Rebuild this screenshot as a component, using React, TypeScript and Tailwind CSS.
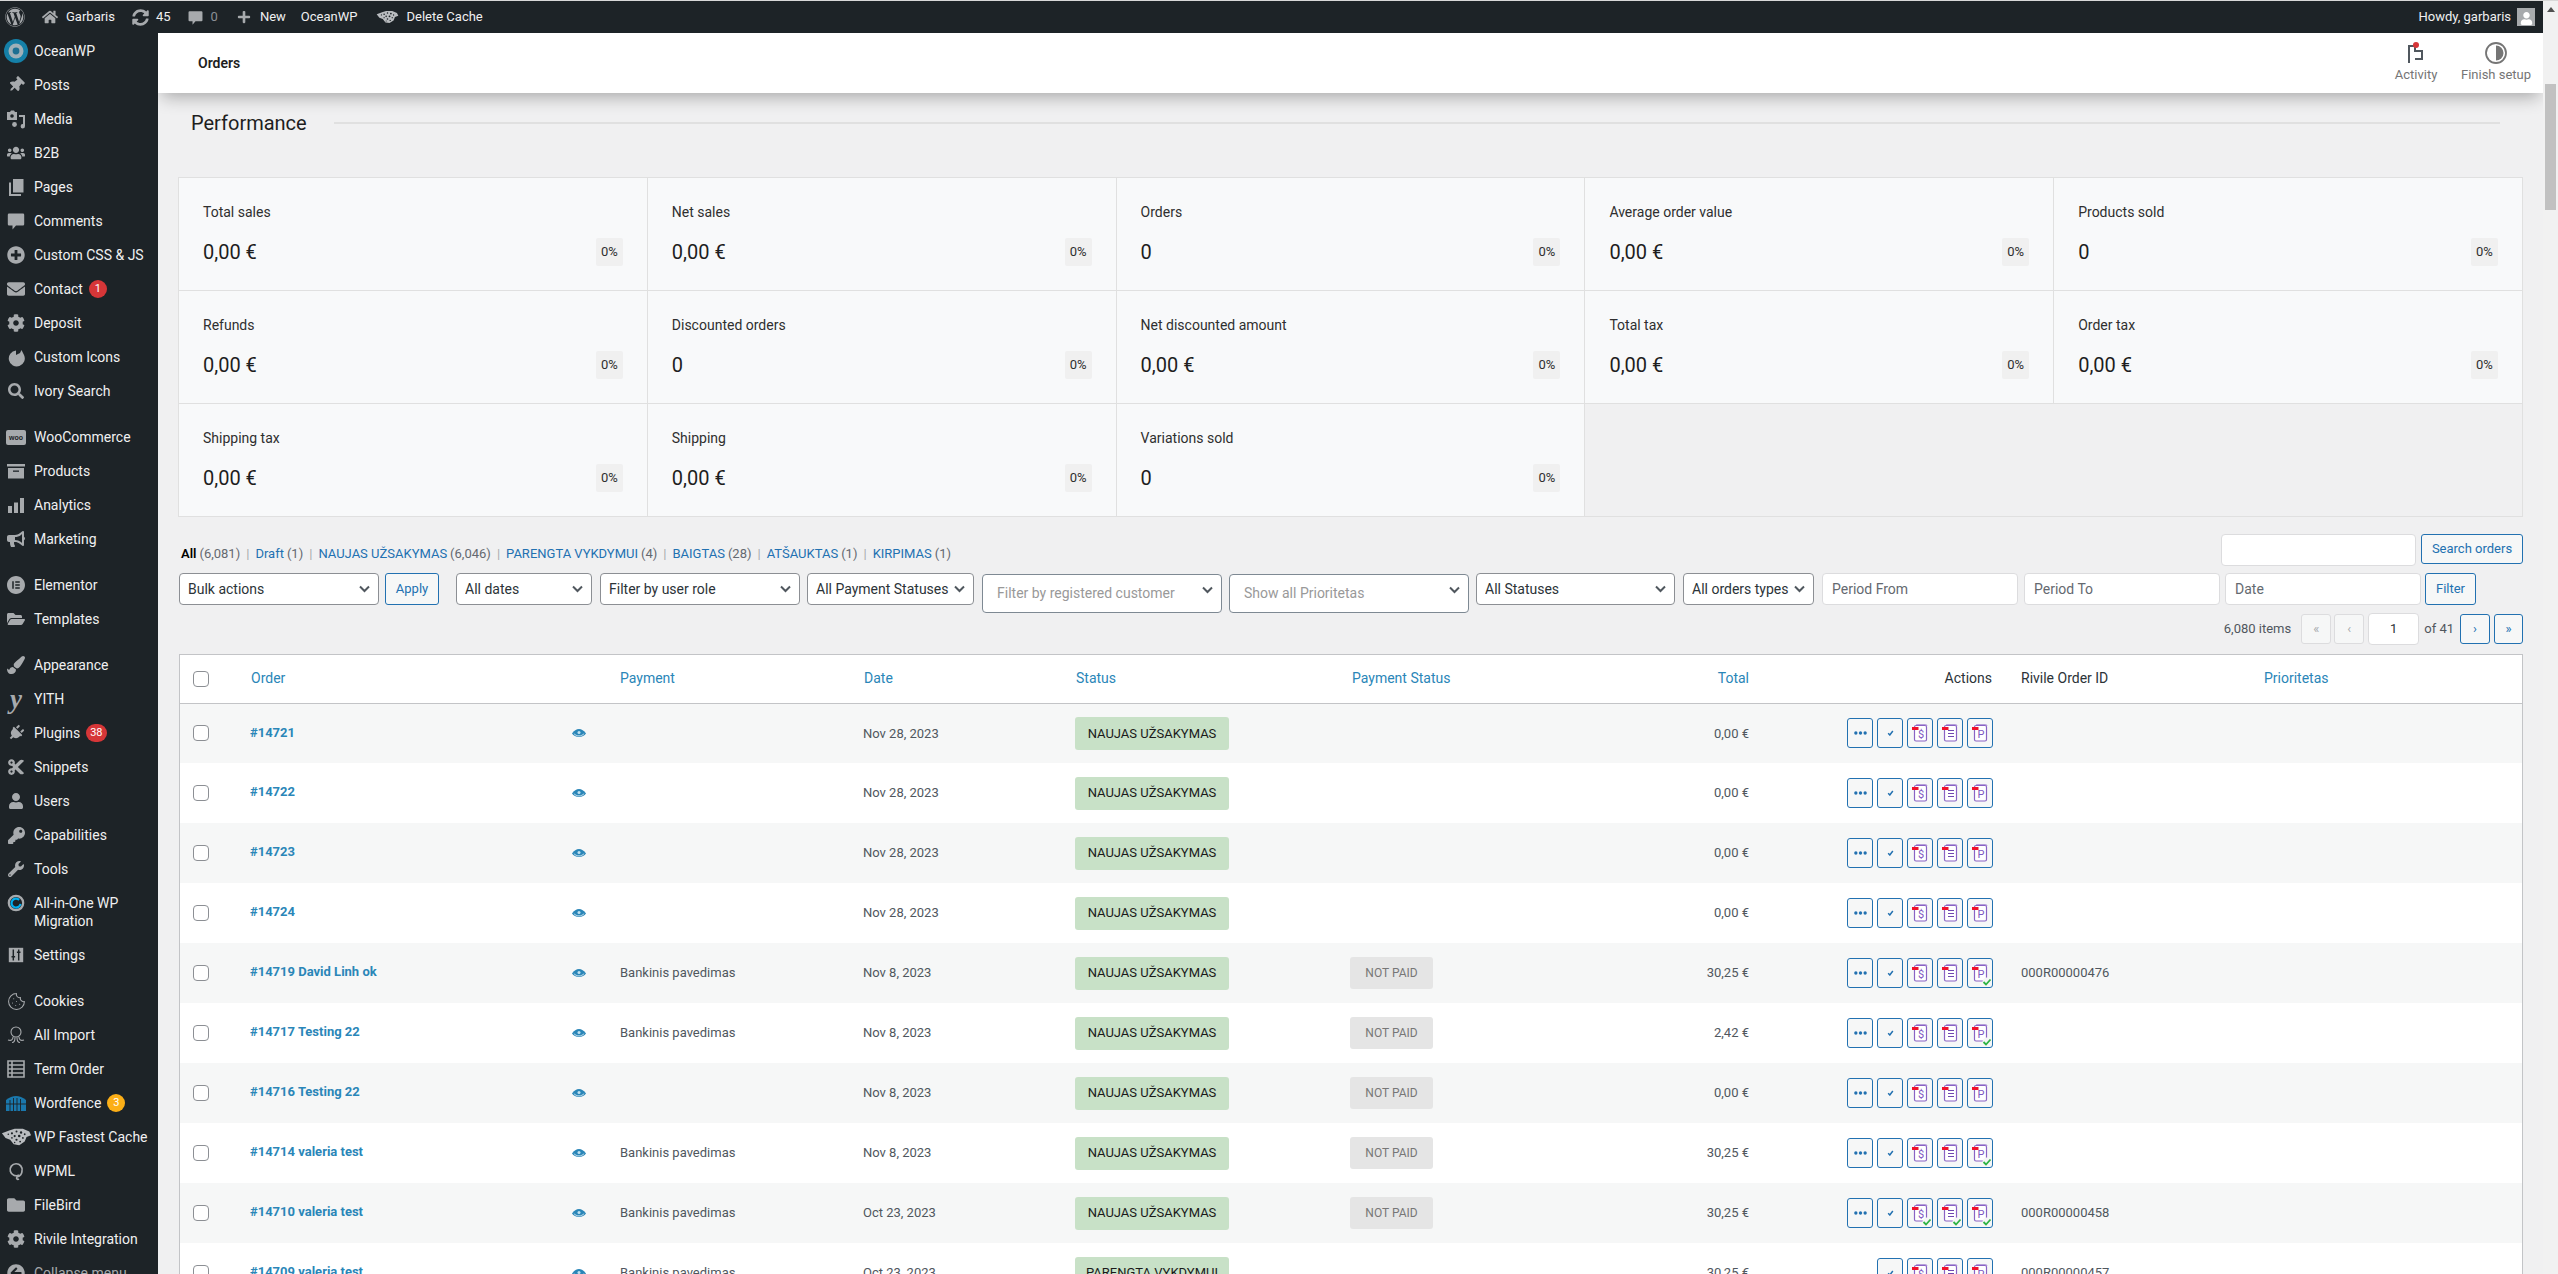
import React from "react";
import {
  FaWordpress, FaHome, FaSyncAlt, FaPlus, FaThumbtack, FaUsers, FaPlusCircle, FaEnvelope, FaCog, FaSearch,
  FaBullhorn, FaFolderOpen, FaPaintBrush, FaPlug, FaCut, FaUser, FaKey, FaWrench, FaFolder, FaArrowCircleLeft,
} from "react-icons/fa";
import { SiElementor } from "react-icons/si";
import { Cookie } from "lucide-react";

const G = "#a7aaad";
const Svg = ({ children, w = 20, h = 20, vb = "0 0 20 20" }: { children: React.ReactNode; w?: number; h?: number; vb?: string }) => (
  <svg width={w} height={h} viewBox={vb} fill={G}>{children}</svg>
);
const CommentIcon = ({ s = 20, fill = G }: { s?: number; fill?: string }) => (
  <svg width={s} height={s} viewBox="0 0 20 20" fill={fill}>
    <path d="M3 2.500h14a1.200 1.200 0 0 1 1.200 1.200v9.600a1.200 1.200 0 0 1-1.200 1.200h-7l-3.500 4v-4H3a1.200 1.200 0 0 1-1.200-1.200V3.700A1.200 1.200 0 0 1 3 2.500z" />
  </svg>
);
const Leopard = ({ w, h }: { w: number; h: number }) => (
  <svg width={w} height={h} viewBox="0 0 34 20">
    <path d="M1 6 L9 3 L15 1 L24 1 L31 4 L33 8 L28 10 L26 15 L20 19 L14 18 L10 13 L5 11 Z" fill="#b9bcbf" />
    <g fill="#1d2327">
      <circle cx="12" cy="6" r="1.200" /><circle cx="17" cy="4" r="1.100" /><circle cx="22" cy="5" r="1.300" /><circle cx="26" cy="7" r="1" />
      <circle cx="15" cy="9" r="1.200" /><circle cx="20" cy="9" r="1.400" /><circle cx="24" cy="11" r="1" /><circle cx="17" cy="13" r="1.200" />
      <circle cx="21" cy="15" r="1" /><circle cx="8" cy="7" r="0.900" /><circle cx="12" cy="11" r="0.900" /><circle cx="15" cy="16" r="0.800" />
    </g>
  </svg>
);
const Rot = ({ children }: { children: React.ReactNode }) => <span className="inline-flex rotate-45">{children}</span>;

type Item = { t: React.ReactNode; i: React.ReactNode; mt?: boolean; badge?: string; color?: string; two?: boolean };
const items: Item[] = [
  { t: "OceanWP", i: <svg width="24" height="24" viewBox="0 0 24 24"><circle cx="12" cy="12" r="12" fill="#1580a8" /><circle cx="12" cy="12" r="7.500" fill="#9fb0b8" /><circle cx="12" cy="12" r="3.400" fill="#1d6f92" /></svg> },
  { t: "Posts", i: <Rot><FaThumbtack size={16} color={G} /></Rot> },
  { t: "Media", i: <Svg><path d="M1 3h3l1-1.500h3L9 3h2v8H1z" /><circle cx="6" cy="7" r="1.800" fill="#1d2327" /><path d="M13 6h6v11a2.200 2.200 0 1 1-2-2V8h-4z" /><circle cx="8.500" cy="15.500" r="2.400" /></Svg> },
  { t: "B2B", i: <FaUsers size={18} color={G} /> },
  { t: "Pages", i: <Svg><path d="M7 2h10.500v13.500H7z" /><path d="M3 5.500h2V17h10v2H3z" /></Svg> },
  { t: "Comments", i: <CommentIcon /> },
  { t: "Custom CSS & JS", i: <FaPlusCircle size={18} color={G} /> },
  { t: "Contact", i: <FaEnvelope size={18} color={G} />, badge: "1" },
  { t: "Deposit", i: <FaCog size={18} color={G} /> },
  { t: "Custom Icons", i: <Svg><path d="M10 3.500 A8 8 0 1 0 18 8 L15.500 3 L14 6 L10 8 Z" /></Svg> },
  { t: "Ivory Search", i: <FaSearch size={16} color={G} /> },
  { t: "WooCommerce", mt: true, i: <span className="flex h-[15px] w-[20px] items-center justify-center rounded-[2px] bg-[#a7aaad] font-['Liberation_Sans',sans-serif] text-[7px] leading-none font-bold text-[#1d2327]">woo</span> },
  { t: "Products", i: <Svg><path d="M1 3h18v2.500H1z" /><path d="M2 7h16v10.500H2z" /><path d="M7 9.500h6v1.300H7z" fill="#1d2327" /></Svg> },
  { t: "Analytics", i: <Svg><path d="M2 11h4v7H2z" /><path d="M8 7.500h4V18H8z" /><path d="M14 3h4v15h-4z" /></Svg> },
  { t: "Marketing", i: <FaBullhorn size={18} color={G} /> },
  { t: "Elementor", mt: true, i: <SiElementor size={18} color={G} /> },
  { t: "Templates", i: <FaFolderOpen size={18} color={G} /> },
  { t: "Appearance", mt: true, i: <FaPaintBrush size={18} color={G} /> },
  { t: "YITH", i: <span className="font-['Liberation_Serif',serif] text-[27px] leading-none font-bold text-[#a7aaad] italic">y</span> },
  { t: "Plugins", i: <Rot><FaPlug size={16} color={G} /></Rot>, badge: "38" },
  { t: "Snippets", i: <FaCut size={18} color={G} /> },
  { t: "Users", i: <FaUser size={16} color={G} /> },
  { t: "Capabilities", i: <FaKey size={17} color={G} /> },
  { t: "Tools", i: <FaWrench size={16} color={G} /> },
  { t: <>All-in-One WP<br />Migration</>, two: true, i: <svg width="18" height="18" viewBox="0 0 20 20" fill="none"><circle cx="10" cy="10" r="8" stroke={G} strokeWidth="2.500" /><path d="M13.500 6.500 A5 5 0 1 0 15 11" stroke="#00aff0" strokeWidth="2.400" /></svg> },
  { t: "Settings", i: <Svg w={18} h={18}><path d="M2 2h16v16H2z" /><path d="M7 4v12M13 4v12M5 12h4M11 7h4" stroke="#1d2327" strokeWidth="1.600" /></Svg> },
  { t: "Cookies", mt: true, i: <Cookie size={19} color={G} strokeWidth={1.3} /> },
  { t: "All Import", i: <svg width="20" height="20" viewBox="0 0 20 20" fill="none" stroke={G} strokeWidth="1.100"><circle cx="10" cy="7" r="5" /><path d="M7 12c0 3-2 4-5 3M13 12c0 3 2 4 5 3M9 12.500c0 3-1 5-3 5M11 12.500c0 3 1 5 3 5" /></svg> },
  { t: "Term Order", i: <svg width="18" height="18" viewBox="0 0 18 18" fill="none" stroke={G} strokeWidth="1.600"><path d="M1 1h16v16H1zM1 5h16M1 9h16M1 13h16M5 1v16" /></svg> },
  { t: "Wordfence", badge: "3", color: "bg-[#fcaf17]", i: <svg width="20" height="16" viewBox="0 0 20 16" fill="#1a78ad"><path d="M0 5 Q10 -3 20 5 V16 H0 Z" /><path d="M4 5v11M7.500 3v13M11 3v13M14.500 4v12M0 9h20" stroke="#1d2327" strokeWidth="0.900" /></svg> },
  { t: "WP Fastest Cache", i: <Leopard w={31} h={20} /> },
  { t: "WPML", i: <svg width="18" height="20" viewBox="0 0 18 20" fill="none" stroke={G} strokeWidth="1.700"><path d="M12 14a6 6 0 1 1 3-4c0 3-2 5-5 6-1 1 0 3 2 2" /></svg> },
  { t: "FileBird", i: <FaFolder size={18} color={G} /> },
  { t: "Rivile Integration", i: <FaCog size={18} color={G} /> },
];

const cells: [string, string][] = [
  ["Total sales", "0,00 €"], ["Net sales", "0,00 €"], ["Orders", "0"], ["Average order value", "0,00 €"], ["Products sold", "0"],
  ["Refunds", "0,00 €"], ["Discounted orders", "0"], ["Net discounted amount", "0,00 €"], ["Total tax", "0,00 €"], ["Order tax", "0,00 €"],
  ["Shipping tax", "0,00 €"], ["Shipping", "0,00 €"], ["Variations sold", "0"],
];

const views: [string, string][] = [
  ["Draft", "(1)"], ["NAUJAS UŽSAKYMAS", "(6,046)"], ["PARENGTA VYKDYMUI", "(4)"], ["BAIGTAS", "(28)"], ["ATŠAUKTAS", "(1)"], ["KIRPIMAS", "(1)"],
];

type Row = { o: string; pay?: string; d: string; s?: string; np?: boolean; tot: string; id?: string; c: number; nodots?: boolean };
const rows: Row[] = [
  { o: "#14721", d: "Nov 28, 2023", tot: "0,00 €", c: 0 },
  { o: "#14722", d: "Nov 28, 2023", tot: "0,00 €", c: 0 },
  { o: "#14723", d: "Nov 28, 2023", tot: "0,00 €", c: 0 },
  { o: "#14724", d: "Nov 28, 2023", tot: "0,00 €", c: 0 },
  { o: "#14719 David Linh ok", pay: "Bankinis pavedimas", d: "Nov 8, 2023", np: true, tot: "30,25 €", id: "000R00000476", c: 1 },
  { o: "#14717 Testing 22", pay: "Bankinis pavedimas", d: "Nov 8, 2023", np: true, tot: "2,42 €", c: 1 },
  { o: "#14716 Testing 22", d: "Nov 8, 2023", np: true, tot: "0,00 €", c: 0 },
  { o: "#14714 valeria test", pay: "Bankinis pavedimas", d: "Nov 8, 2023", np: true, tot: "30,25 €", c: 1 },
  { o: "#14710 valeria test", pay: "Bankinis pavedimas", d: "Oct 23, 2023", np: true, tot: "30,25 €", id: "000R00000458", c: 3 },
  { o: "#14709 valeria test", pay: "Bankinis pavedimas", d: "Oct 23, 2023", s: "PARENGTA VYKDYMUI", tot: "30,25 €", id: "000R00000457", c: 3, nodots: true },
];

const Chevron = ({ className }: { className: string }) => (
  <svg className={className} width="11" height="8" viewBox="0 0 11 8" fill="none" stroke="#50575e" strokeWidth="2"><path d="M1 1.500l4.500 4.500 4.500-4.500" /></svg>
);
const Sel = ({ w, ml, label }: { w: string; ml: string; label: string }) => (
  <div className={`relative h-[32px] shrink-0 ${w} ${ml}`}>
    <select defaultValue={label} className="h-full w-full appearance-none rounded-[4px] border border-[#8c8f94] bg-white pl-[8px] pr-[20px] text-[14px] text-[#2c3338] outline-none">
      <option>{label}</option>
    </select>
    <Chevron className="pointer-events-none absolute top-[12px] right-[9px]" />
  </div>
);
const Sel2 = ({ ml, label }: { ml: string; label: string }) => (
  <div className={`relative mt-[1px] flex h-[39px] w-[240px] shrink-0 items-center rounded-[4px] border border-[#7e8993] bg-white pl-[14px] text-[14px] text-[#999] ${ml}`}>
    {label}
    <Chevron className="absolute top-[11px] right-[8px]" />
  </div>
);
const Inp = ({ w, ml, ph }: { w: string; ml: string; ph: string }) => (
  <input readOnly placeholder={ph} className={`h-[32px] shrink-0 rounded-[4px] border border-[#dcdcde] bg-white px-[9px] text-[14px] text-[#2c3338] outline-none placeholder:text-[#646970] ${w} ${ml}`} />
);
const Btn = ({ children, w, ml = "", h = "h-[32px]" }: { children: React.ReactNode; w: string; ml?: string; h?: string }) => (
  <button className={`flex shrink-0 items-center justify-center rounded-[3px] border border-[#2271b1] bg-[#f6f7f7] text-[13px] text-[#2271b1] ${w} ${h} ${ml}`}>{children}</button>
);

const Doc = ({ kind, check }: { kind: string; check: boolean }) => (
  <svg width="24" height="28" viewBox="0 0 24 28" className="block">
    <rect x="6.500" y="6.500" width="12" height="15.500" rx="1.500" fill="#fff" stroke="#8a63c4" strokeWidth="1.200" />
    <path d="M8.500 6v-0.500h9a1.500 1.500 0 0 1 1.500 1.500" fill="none" stroke="#8a63c4" strokeWidth="0.600" />
    {kind === "l" ? (
      <path d="M10 11.500h6M10 14.500h6M10 17.500h6" stroke="#6f48b0" strokeWidth="1.200" />
    ) : (
      <text x="13" y="18.500" textAnchor="middle" fontSize="11" fill="#7e57c2" fontFamily="Roboto, sans-serif">{kind}</text>
    )}
    <rect x="4" y="8" width="6.500" height="3" fill="#f0102a" />
    {check && (
      <>
        <circle cx="19" cy="23" r="4.500" fill="#f6f7f7" />
        <path d="M15.500 23l2.500 2.500 4.500-5" fill="none" stroke="#2fb344" strokeWidth="1.800" />
      </>
    )}
  </svg>
);
const ActBtn = ({ children }: { children: React.ReactNode }) => (
  <button className="flex h-[30px] w-[26px] items-center justify-center rounded-[3px] border border-[#2271b1] bg-[#f6f7f7]">{children}</button>
);
const Eye = () => (
  <svg width="14" height="10" viewBox="0 0 14 10" className="block" fill="#2a86b8">
    <path d="M0 5.500C2 2.500 4.500 1 7 1s5 1.500 7 4.500C12.500 7.500 10 9 7 9S1.500 7.500 0 5.500z" />
    <path d="M1.800 5.500C3 7 5 7.900 7 7.900s4-.9 5.200-2.400" fill="none" stroke="#fff" strokeWidth="0.700" />
    <circle cx="7" cy="4.500" r="1.500" fill="#bfe0f0" />
  </svg>
);

const thLink = "font-normal text-[#2a86b8] text-left";
const box = "block h-[16px] w-[16px] appearance-none rounded-[4px] border border-[#8c8f94] bg-white";

export default function App() {
  return (
    <div className="flex h-[1274px] w-[2558px] flex-col overflow-hidden bg-[#f0f0f1] font-['Roboto',sans-serif]">
      <div className="h-px w-full shrink-0 bg-[#d8d8d8]" />
      <div className="flex min-h-0 flex-1">
        <div className="flex w-[2543px] shrink-0 flex-col">
          {/* admin bar */}
          <div className="flex h-[32px] shrink-0 items-center bg-[#1d2327] text-[13px] text-[#f0f0f1]">
            <span className="ml-[5px] w-[20px]"><FaWordpress size={20} color={G} /></span>
            <span className="ml-[17px]"><FaHome size={16} color={G} /></span>
            <span className="ml-[8px]">Garbaris</span>
            <span className="ml-[17px]"><FaSyncAlt size={17} color={G} /></span>
            <span className="ml-[7px]">45</span>
            <span className="ml-[16px]"><CommentIcon s={17} /></span>
            <span className="ml-[7px] text-[#8c8f94]">0</span>
            <span className="ml-[19px]"><FaPlus size={14} color={G} /></span>
            <span className="ml-[9px]">New</span>
            <span className="ml-[15px]">OceanWP</span>
            <span className="ml-[18px]"><Leopard w={23} h={16} /></span>
            <span className="ml-[8px]">Delete Cache</span>
            <span className="ml-auto">Howdy, garbaris</span>
            <span className="mr-[8px] ml-[6px] flex h-[18px] w-[18px] items-end justify-center overflow-hidden border border-[#a7aaad] bg-[#a7aaad]"><FaUser size={13} color="#fff" /></span>
          </div>
          <div className="flex min-h-0 flex-1">
            {/* sidebar */}
            <nav className="flex w-[158px] shrink-0 flex-col overflow-hidden bg-[#1d2327] pt-[1px] text-[14px] text-[#f0f0f1]">
              {items.map((it, idx) => (
                <div key={idx} className={`flex shrink-0 ${it.two ? "h-[52px] items-center" : "h-[34px] items-center"} ${it.mt ? "mt-[12px]" : ""}`}>
                  <span className={`flex w-[32px] shrink-0 justify-center ${it.two ? "-mt-[18px]" : ""}`}>{it.i}</span>
                  <span className="ml-[2px] leading-[18px] whitespace-nowrap">{it.t}</span>
                  {it.badge && (
                    <span className={`ml-[6px] flex h-[18px] min-w-[18px] items-center justify-center rounded-full px-[4px] text-[11px] text-white ${it.color ?? "bg-[#d63638]"}`}>{it.badge}</span>
                  )}
                </div>
              ))}
              <div className="flex h-[34px] shrink-0 items-center text-[#a7aaad]">
                <span className="flex w-[32px] justify-center"><FaArrowCircleLeft size={18} color={G} /></span>
                <span className="ml-[2px]">Collapse menu</span>
              </div>
            </nav>
            {/* main */}
            <main className="min-w-0 flex-1 overflow-hidden">
              <header className="relative z-10 flex h-[60px] items-center justify-between bg-white pl-[40px] shadow-[0_8px_16px_-4px_rgba(0,0,0,0.3)]">
                <h1 className="text-[14px] font-semibold text-[#1e1e1e]">Orders</h1>
                <div className="flex text-[13px] whitespace-nowrap text-[#757575]">
                  <div className="flex w-[42px] flex-col items-center gap-[2px]">
                    <svg width="18" height="22" viewBox="0 0 18 22" fill="none">
                      <path d="M2 21V4h6v5h7v8H8" stroke="#50575e" strokeWidth="2" />
                      <circle cx="9" cy="3" r="3" fill="#d63638" />
                    </svg>
                    <span className="leading-[18px]">Activity</span>
                  </div>
                  <div className="mr-[12px] ml-[24px] flex w-[70px] flex-col items-center gap-[2px]">
                    <svg width="22" height="22" viewBox="0 0 22 22">
                      <circle cx="11" cy="11" r="10" fill="#fff" stroke="#757575" strokeWidth="1.800" />
                      <path d="M11 3.500a7.500 7.500 0 0 1 0 15z" fill="#757575" />
                    </svg>
                    <span className="leading-[18px]">Finish setup</span>
                  </div>
                </div>
              </header>
              <div className="pr-[20px] pl-[20px]">
                <div className="mt-[16px] flex h-[28px] items-center pl-[13px]">
                  <h2 className="text-[20px] leading-[28px] text-[#1e1e1e]">Performance</h2>
                  <div className="mr-[23px] ml-[27px] h-[2px] flex-1 bg-[#e0e0e0]" />
                </div>
                <div className="mt-[40px] grid grid-cols-5 border-t border-l border-[#e0e0e0]">
                  {cells.map(([l, v]) => (
                    <div key={l} className="h-[113px] border-r border-b border-[#e0e0e0] bg-[#f8f9fa] pt-[24px] pr-[24px] pl-[24px]">
                      <div className="text-[14px] leading-[20px] text-[#2f2f2f]">{l}</div>
                      <div className="mt-[16px] flex h-[28px] items-center justify-between">
                        <span className="text-[20px] text-[#1e1e1e]">{v}</span>
                        <span className="flex h-[28px] w-[27px] items-center justify-center rounded-[2px] bg-[#f0f0f0] text-[13px] text-[#2f2f2f]">0%</span>
                      </div>
                    </div>
                  ))}
                  <div className="col-span-2 h-[113px] border-r border-b border-[#e0e0e0]" />
                </div>

                <div className="mt-[17px] ml-[1px] flex h-[32px] items-start justify-between">
                  <div className="mt-[11px] flex items-center pl-[2px] text-[13px] leading-[18px] whitespace-nowrap text-[#646970]">
                    <b className="font-semibold text-black">All</b>
                    <span className="ml-[3px]">(6,081)</span>
                    {views.map(([a, n]) => (
                      <React.Fragment key={a}>
                        <span className="mx-[6px] text-[#a7aaad]">|</span>
                        <span className="text-[#2271b1]">{a}</span>
                        <span className="ml-[3px]">{n}</span>
                      </React.Fragment>
                    ))}
                  </div>
                  <div className="flex items-start">
                    <input readOnly className="h-[32px] w-[195px] rounded-[4px] border border-[#dcdcde] bg-white outline-none" />
                    <Btn w="w-[102px]" ml="ml-[5px]" h="h-[30px]">Search orders</Btn>
                  </div>
                </div>

                <div className="mt-[7px] ml-[1px] flex h-[40px] items-start">
                  <Sel w="w-[200px]" ml="" label="Bulk actions" />
                  <Btn w="w-[54px]" ml="ml-[6px]">Apply</Btn>
                  <Sel w="w-[136px]" ml="ml-[17px]" label="All dates" />
                  <Sel w="w-[200px]" ml="ml-[8px]" label="Filter by user role" />
                  <Sel w="w-[167px]" ml="ml-[7px]" label="All Payment Statuses" />
                  <Sel2 ml="ml-[8px]" label="Filter by registered customer" />
                  <Sel2 ml="ml-[7px]" label="Show all Prioritetas" />
                  <Sel w="w-[199px]" ml="ml-[7px]" label="All Statuses" />
                  <Sel w="w-[131px]" ml="ml-[8px]" label="All orders types" />
                  <Inp w="w-[196px]" ml="ml-[8px]" ph="Period From" />
                  <Inp w="w-[196px]" ml="ml-[6px]" ph="Period To" />
                  <Inp w="w-[196px]" ml="ml-[5px]" ph="Date" />
                  <Btn w="w-[51px]" ml="ml-[4px]">Filter</Btn>
                </div>

                <div className="flex h-[32px] items-center justify-end text-[13px] text-[#50575e]">
                  <span className="mr-[10px]">6,080 items</span>
                  <span className="flex h-[30px] w-[30px] items-center justify-center rounded-[3px] border border-[#dcdcde] bg-[#f6f7f7] text-[#a7aaad]">«</span>
                  <span className="ml-[3px] flex h-[30px] w-[30px] items-center justify-center rounded-[3px] border border-[#dcdcde] bg-[#f6f7f7] text-[#a7aaad]">‹</span>
                  <span className="ml-[4px] flex h-[32px] w-[51px] items-center justify-center rounded-[4px] border border-[#dcdcde] bg-white text-[#2c3338]">1</span>
                  <span className="ml-[5px]">of 41</span>
                  <span className="ml-[6px] flex h-[30px] w-[30px] items-center justify-center rounded-[3px] border border-[#2271b1] bg-[#f6f7f7] text-[#2271b1]">›</span>
                  <span className="ml-[4px] flex h-[30px] w-[29px] items-center justify-center rounded-[3px] border border-[#2271b1] bg-[#f6f7f7] text-[#2271b1]">»</span>
                </div>

                <div className="mt-[9px] ml-[1px] border border-b-0 border-[#c3c4c7] bg-white">
                  <table className="w-full table-fixed border-collapse text-[13px] text-[#50575e]">
                    <colgroup>
                      <col className="w-[60px]" /><col className="w-[370px]" /><col className="w-[244px]" /><col className="w-[212px]" />
                      <col className="w-[276px]" /><col className="w-[290px]" /><col className="w-[127px]" /><col className="w-[252px]" />
                      <col className="w-[243px]" /><col className="w-[268px]" />
                    </colgroup>
                    <thead>
                      <tr className="h-[48px] border-b border-[#c3c4c7] text-[14px]">
                        <th className="pl-[13px] text-left"><input type="checkbox" readOnly className={box} /></th>
                        <th className={`${thLink} pl-[11px]`}>Order</th>
                        <th className={`${thLink} pl-[10px]`}>Payment</th>
                        <th className={`${thLink} pl-[10px]`}>Date</th>
                        <th className={`${thLink} pl-[10px]`}>Status</th>
                        <th className={`${thLink} pl-[10px]`}>Payment Status</th>
                        <th className="pr-[10px] text-right font-normal text-[#2a86b8]">Total</th>
                        <th className="pr-[19px] text-right font-normal text-[#2c3338]">Actions</th>
                        <th className="pl-[10px] text-left font-normal text-[#2c3338]">Rivile Order ID</th>
                        <th className={`${thLink} pl-[10px]`}>Prioritetas</th>
                      </tr>
                    </thead>
                    <tbody>
                      {rows.map((r, i) => (
                        <tr key={r.o} className={`h-[60px] ${i % 2 === 0 ? "bg-[#f6f7f7]" : "bg-white"}`}>
                          <td className="pl-[13px]"><input type="checkbox" readOnly className={box} /></td>
                          <td className="pr-[24px] pl-[10px]">
                            <div className="flex items-center justify-between">
                              <span className="-mt-[2px] font-bold text-[#2a86b8]">{r.o}</span>
                              <Eye />
                            </div>
                          </td>
                          <td className="pl-[10px]">{r.pay}</td>
                          <td className="pl-[9px]">{r.d}</td>
                          <td className="pl-[9px]">
                            <span className="flex h-[33px] w-[154px] items-center justify-center rounded-[3px] bg-[#c8e1c7] text-[13px] text-[#1a1a1a]">{r.s ?? "NAUJAS UŽSAKYMAS"}</span>
                          </td>
                          <td className="pl-[8px]">
                            {r.np && <span className="flex h-[32px] w-[83px] items-center justify-center rounded-[3px] bg-[#e5e5e5] text-[12px] text-[#777]">NOT PAID</span>}
                          </td>
                          <td className="pr-[10px] text-right">{r.tot}</td>
                          <td className="pr-[18px]">
                            <div className="flex justify-end gap-[4px]">
                              {!r.nodots && (
                                <ActBtn>
                                  <svg width="13" height="4" viewBox="0 0 14 4" fill="#2271b1"><circle cx="2" cy="2" r="1.800" /><circle cx="7" cy="2" r="1.800" /><circle cx="12" cy="2" r="1.800" /></svg>
                                </ActBtn>
                              )}
                              <ActBtn>
                                <svg width="7" height="6" viewBox="0 0 10 9" fill="none" stroke="#2271b1" strokeWidth="2.200"><path d="M1.500 5l2.500 2.500 4.500-6" /></svg>
                              </ActBtn>
                              <ActBtn><Doc kind="$" check={r.c === 3} /></ActBtn>
                              <ActBtn><Doc kind="l" check={r.c === 3} /></ActBtn>
                              <ActBtn><Doc kind="P" check={r.c >= 1} /></ActBtn>
                            </div>
                          </td>
                          <td className="pl-[10px]">{r.id}</td>
                          <td />
                        </tr>
                      ))}
                    </tbody>
                  </table>
                </div>
              </div>
            </main>
          </div>
        </div>
        {/* page scrollbar */}
        <div className="flex w-[15px] shrink-0 flex-col items-center bg-[#f1f1f1]">
          <div className="mt-[6px] h-0 w-0 border-x-[4px] border-b-[5px] border-x-transparent border-b-[#505050]" />
          <div className="mt-[72px] h-[126px] w-[11px] bg-[#c1c1c1]" />
        </div>
      </div>
    </div>
  );
}
